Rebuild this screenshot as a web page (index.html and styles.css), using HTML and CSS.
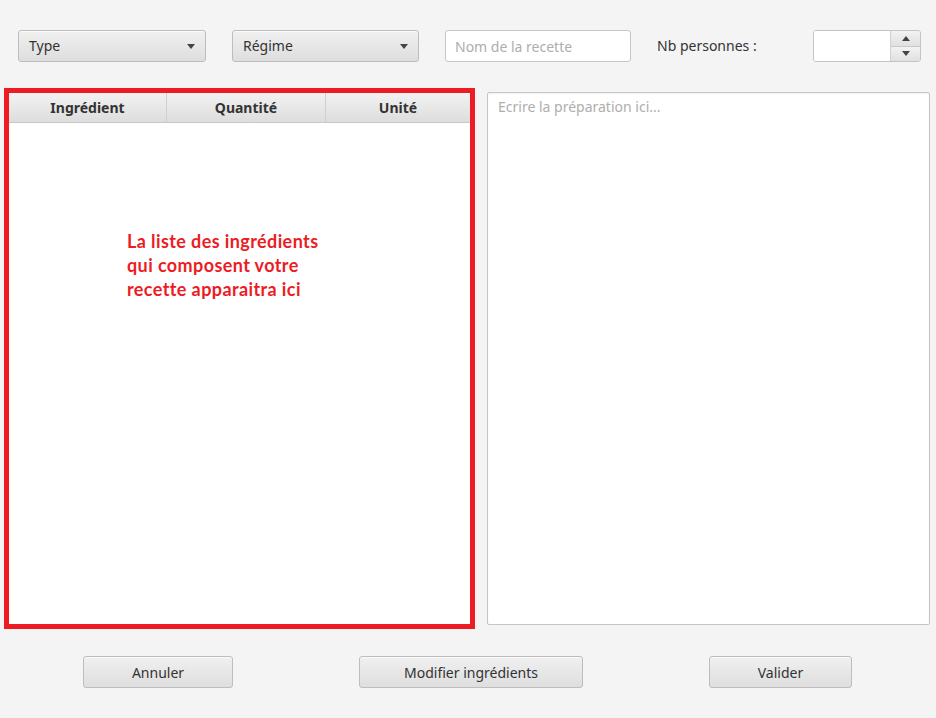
FILE: index.html
```html
<!DOCTYPE html>
<html lang="fr">
<head>
<meta charset="utf-8">
<link rel="stylesheet" href="styles.css">
</head>
<body>
<div class="app">
  <div class="toolbar">
    <div class="combo combo-type"><span>Type</span><i class="arrow"></i></div>
    <div class="combo combo-regime"><span>Régime</span><i class="arrow"></i></div>
    <div class="field field-name"><span class="placeholder">Nom de la recette</span></div>
    <div class="label">Nb personnes :</div>
    <div class="spinner">
      <div class="spin-input"></div>
      <div class="spin-buttons">
        <div class="spin-btn"><i class="arrow up"></i></div>
        <div class="spin-btn"><i class="arrow"></i></div>
      </div>
    </div>
  </div>
  <div class="main">
    <div class="table-frame">
      <div class="table">
        <div class="thead">
          <div class="th th-1">Ingrédient</div>
          <div class="th th-2">Quantité</div>
          <div class="th th-3">Unité</div>
        </div>
        <div class="tbody">
          <p class="note">La liste des ingrédients<br>qui composent votre<br>recette apparaitra ici</p>
        </div>
      </div>
    </div>
    <div class="textarea"><span class="placeholder">Ecrire la préparation ici...</span></div>
  </div>
  <div class="actions">
    <div class="btn btn-cancel">Annuler</div>
    <div class="btn btn-edit">Modifier ingrédients</div>
    <div class="btn btn-ok">Valider</div>
  </div>
</div>
</body>
</html>
```
FILE: styles.css
```css
html, body {
  margin: 0;
  padding: 0;
  background: #f4f4f4;
}
body {
  font-family: "Noto Sans", "Open Sans", sans-serif;
  font-size: 14px;
  color: #333;
}
.app {
  width: 936px;
  height: 718px;
  overflow: hidden;
}
.toolbar {
  display: flex;
  align-items: center;
  padding: 30px 0 0 18px;
  height: 32px;
}
.combo {
  box-sizing: border-box;
  height: 32px;
  border: 1px solid #bdbdbd;
  border-radius: 3px;
  background: linear-gradient(#f0f0f0, #dedede);
  display: flex;
  align-items: center;
  justify-content: space-between;
  padding: 0 10px 0 10px;
  box-shadow: inset 0 1px 0 #fafafa;
}
.combo span { padding-bottom: 1px; }
.combo-type { width: 188px; }
.combo-regime { width: 187px; margin-left: 26px; }
.arrow {
  display: block;
  width: 0;
  height: 0;
  border-left: 4.5px solid transparent;
  border-right: 4.5px solid transparent;
  border-top: 5px solid #444;
}
.arrow.up {
  border-top: 0;
  border-bottom: 5px solid #444;
}
.field {
  box-sizing: border-box;
  height: 32px;
  border: 1px solid #c6c6c6;
  border-radius: 3px;
  background: #fff;
  display: flex;
  align-items: center;
  padding: 0 9px;
}
.field-name { width: 186px; margin-left: 26px; }
.placeholder { color: #aeaeae; }
.label { margin-left: 26px; padding-bottom: 2px; width: 130px; }
.spinner {
  margin-left: 26px;
  width: 108px;
  height: 32px;
  box-sizing: border-box;
  border: 1px solid #c4c4c4;
  border-radius: 3px;
  display: flex;
  overflow: hidden;
}
.spin-input { flex: 1; background: #fff; }
.spin-buttons {
  width: 29px;
  display: flex;
  flex-direction: column;
  border-left: 1px solid #d0d0d0;
}
.spin-btn {
  flex: 1;
  display: flex;
  align-items: center;
  justify-content: center;
  background: linear-gradient(#f2f2f2, #e0e0e0);
}
.spin-btn + .spin-btn { border-top: 1px solid #c8c8c8; }
.main {
  display: flex;
  align-items: flex-start;
  padding: 26px 0 0 4px;
}
.table-frame {
  width: 471px;
  height: 541px;
  box-sizing: border-box;
  border: 5px solid #ed1c24;
  background: #fff;
}
.table { height: 100%; display: flex; flex-direction: column; }
.thead {
  display: flex;
  height: 30px;
  background: linear-gradient(#f2f2f2, #dddddd);
  border-bottom: 1px solid #c8c8c8;
  box-sizing: border-box;
}
.th {
  display: flex;
  align-items: center;
  justify-content: center;
  font-weight: bold;
  color: #333;
  box-sizing: border-box;
}
.th-1 { width: 158px; border-right: 1px solid #d0d0d0; }
.th-2 { width: 159px; border-right: 1px solid #d0d0d0; }
.th-3 { flex: 1; }
.tbody { flex: 1; }
.note {
  margin: 0;
  padding: 106px 0 0 118px;
  font-family: "Lato", "Open Sans", sans-serif;
  font-weight: bold;
  font-size: 18px;
  letter-spacing: 0.4px;
  line-height: 24px;
  color: #ed1c24;
}
.textarea {
  margin: 4px 0 0 12px;
  width: 443px;
  height: 533px;
  box-sizing: border-box;
  border: 1px solid #c6c6c6;
  border-radius: 2px;
  background: #fff;
  padding: 4px 10px;
  box-shadow: inset 0 1px 2px rgba(0,0,0,0.06);
}
.actions {
  display: flex;
  padding: 27px 0 0 83px;
  gap: 126px;
}
.btn {
  box-sizing: border-box;
  height: 32px;
  border: 1px solid #bdbdbd;
  border-radius: 3px;
  background: linear-gradient(#f0f0f0, #dedede);
  display: flex;
  align-items: center;
  justify-content: center;
  box-shadow: inset 0 1px 0 #fafafa;
}
.btn-cancel { width: 150px; }
.btn-edit { width: 224px; }
.btn-ok { width: 143px; }
```
